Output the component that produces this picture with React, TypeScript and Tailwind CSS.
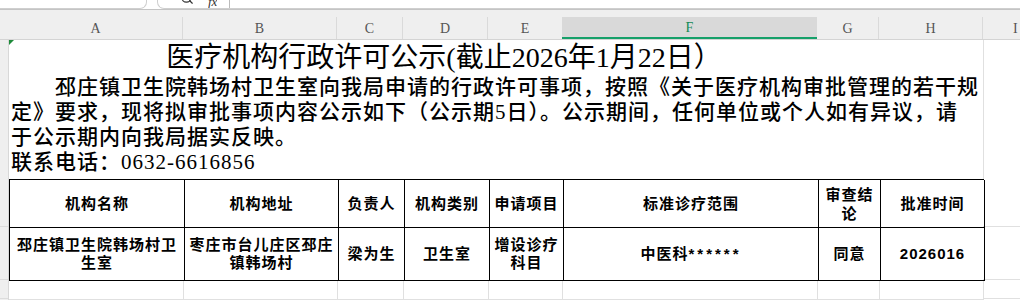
import { Search } from "lucide-react";

const cols = [
  { key: "A", w: 174 },
  { key: "B", w: 154 },
  { key: "C", w: 66 },
  { key: "D", w: 85 },
  { key: "E", w: 74 },
  { key: "F", w: 255 },
  { key: "G", w: 62 },
  { key: "H", w: 104 },
];

const headers = ["机构名称", "机构地址", "负责人", "机构类别", "申请项目", "标准诊疗范围", "审查结论", "批准时间"];

const serif = "font-['Liberation_Serif','Noto_Sans_CJK_SC',serif]";
const sans = "font-['Liberation_Sans','Noto_Sans_CJK_SC',sans-serif]";

function ColumnHeader() {
  return (
    <div className="flex h-[30px] border-b border-[#d4d4d4] bg-[#efefef] pt-[7px]">
      <div className="w-[9px] shrink-0" />
      {cols.map((c) => {
        const active = c.key === "F";
        return (
          <div
            key={c.key}
            style={{ width: c.w }}
            className={
              active
                ? "flex h-[22px] shrink-0 items-end border-b-2 border-[#16a06a] bg-[#d9d9d9]"
                : "flex h-[22px] shrink-0 items-end"
            }
          >
            <div
              className={
                active
                  ? `flex h-full flex-1 items-center justify-center text-[14px] text-[#148a55] ${serif}`
                  : `flex h-full flex-1 items-center justify-center text-[14px] text-[#555] ${serif}`
              }
            >
              {c.key}
            </div>
            {!active && c.key !== "E" && <div className="h-[22px] w-px bg-[#dadada]" />}
          </div>
        );
      })}
      <div className={`flex h-[22px] flex-1 items-center pl-[30px] text-[14px] text-[#555] ${serif}`}>I</div>
    </div>
  );
}

function TopStrip() {
  return (
    <div className="flex h-[10px] border-b border-[#c4c4c4] bg-white">
      <div className="h-[9px] w-[147px] rounded-br-[7px] border-r border-b border-[#cfcfcf]" />
      <div className="ml-[10px] flex h-[9px] flex-1 items-end overflow-hidden rounded-bl-[7px] border-l border-b border-[#cfcfcf]">
        <div className="ml-[22px] flex h-[9px] items-end overflow-hidden">
          <Search className="-mb-[1px] h-[14px] w-[14px] translate-y-[-4px] text-[#333]" strokeWidth={2} />
        </div>
        <div className={`ml-[14px] h-[9px] overflow-hidden text-[13px] leading-[6px] italic text-[#333] ${serif}`}>fx</div>
        <div className="ml-[12px] h-[8px] w-px bg-[#bbb]" />
      </div>
    </div>
  );
}

export default function App() {
  return (
    <div className="h-[300px] w-[1020px] overflow-hidden bg-white">
      <TopStrip />
      <ColumnHeader />
      <div className="flex">
        <div className="flex w-[9px] shrink-0 flex-col border-r border-[#d8d8d8] bg-[#efefef]">
          <div className="h-[187px] border-b border-[#dcdcdc]" />
          <div className="h-[53px] border-b border-[#dcdcdc]" />
          <div className="h-[19px] border-b border-[#dcdcdc]" />
        </div>
        <div className="relative w-[974px] shrink-0">
          <div className="absolute top-0 left-0 h-0 w-0 border-t-[5px] border-r-[5px] border-t-[#1e8a3a] border-r-transparent" />
          <div className="flex h-[35px] w-[870px] items-center justify-center">
            <div className={`text-[28px] leading-none text-black ${serif}`}>医疗机构行政许可公示(截止2026年1月22日）</div>
          </div>
          <div className={`pl-[2px] text-[21px] font-medium tracking-[1px] text-black ${serif}`}>
            <div className="h-[25px] pl-[44px] leading-[25px] whitespace-nowrap">
              邳庄镇卫生院韩场村卫生室向我局申请的行政许可事项，按照《关于医疗机构审批管理的若干规
            </div>
            <div className="h-[25px] leading-[25px] whitespace-nowrap">
              定》要求，现将拟审批事项内容公示如下（公示期5日）。公示期间，任何单位或个人如有异议，请
            </div>
            <div className="h-[25px] leading-[25px] whitespace-nowrap">于公示期内向我局据实反映。</div>
            <div className="h-[25px] leading-[25px] whitespace-nowrap">联系电话：0632-6616856</div>
          </div>
          <div className="h-[4px]" />
          <div
            className={`grid w-[975px] grid-cols-[175px_154px_66px_85px_74px_255px_62px_104px] border-t border-l border-black text-[15px] font-bold tracking-[1px] text-black ${sans}`}
          >
            {headers.map((h) => (
              <div
                key={h}
                className="flex h-[48px] items-center justify-center border-r border-b border-black px-[2px] text-center leading-[19px]"
              >
                {h === "审查结论" ? (
                  <span>
                    审查结
                    <br />
                    论
                  </span>
                ) : (
                  h
                )}
              </div>
            ))}
            <Cell lines={["邳庄镇卫生院韩场村卫", "生室"]} />
            <Cell lines={["枣庄市台儿庄区邳庄", "镇韩场村"]} />
            <Cell lines={["梁为生"]} />
            <Cell lines={["卫生室"]} />
            <Cell lines={["增设诊疗", "科目"]} />
            <div className="flex h-[53px] items-center justify-center border-r border-b border-black">
              中医科<span className="tracking-[3px]">******</span>
            </div>
            <Cell lines={["同意"]} />
            <Cell lines={["2026016"]} />
          </div>
          <div className="grid w-[975px] grid-cols-[175px_154px_66px_85px_74px_255px_62px_104px]">
            {cols.map((c) => (
              <div key={c.key} className="h-[19px] border-r border-b border-[#e0e0e0]" />
            ))}
          </div>
        </div>
        <div className="flex flex-1 flex-col">
          <div className="h-[139px] border-l border-[#e0e0e0]" />
          <div className="h-[48px] border-b border-[#e0e0e0]" />
          <div className="h-[53px] border-b border-[#e0e0e0]" />
          <div className="h-[19px] border-b border-[#e0e0e0]" />
        </div>
      </div>
    </div>
  );
}

function Cell({ lines }: { lines: string[] }) {
  return (
    <div className="flex h-[53px] flex-col items-center justify-center border-r border-b border-black text-center leading-[18px]">
      {lines.map((l) => (
        <div key={l} className="whitespace-nowrap">
          {l}
        </div>
      ))}
    </div>
  );
}
